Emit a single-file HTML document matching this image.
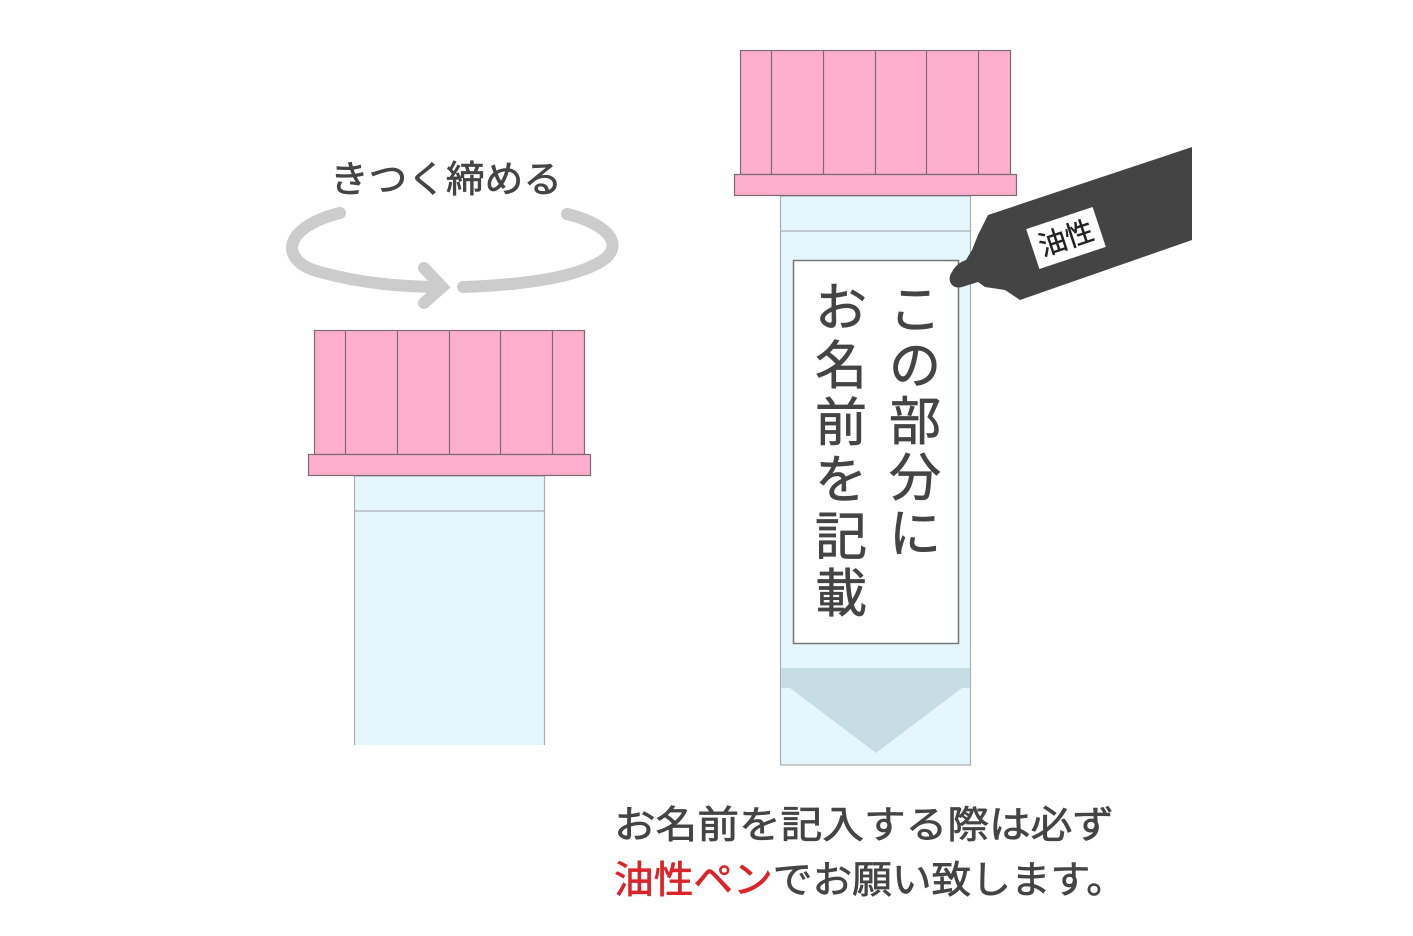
<!DOCTYPE html>
<html><head><meta charset="utf-8"><style>
html,body{margin:0;padding:0;background:#fff;width:1413px;height:936px;overflow:hidden}
svg{display:block}
text{font-family:"Liberation Sans","Noto Sans CJK JP",sans-serif;fill:#444;stroke:#444;stroke-width:0.7}
</style></head><body>
<svg width="1413" height="936" viewBox="0 0 1413 936" xmlns="http://www.w3.org/2000/svg">
<g fill="none" stroke="#cccccc" stroke-width="12" stroke-linecap="round">
<path d="M340 213 C 280 228, 280 262, 320 272 C 360 283, 400 287, 440 287"/>
<path d="M424 268 L442 287 L424 303"/>
<path d="M463 287 C 520 285, 580 278, 606 258 C 625 240, 600 222, 567 214"/>
</g>
<text x="330" y="192" font-size="37" textLength="232" lengthAdjust="spacingAndGlyphs">きつく締める</text>

<rect x="354.5" y="476" width="190" height="272" fill="#e6f6fd" stroke="#a9aeb3" stroke-width="1.2"/>
<rect x="353" y="745" width="193" height="5" fill="#fff"/>
<line x1="354" y1="511" x2="545" y2="511" stroke="#a9aeb3" stroke-width="1.2"/>
<rect x="314.5" y="330.5" width="270" height="124" fill="#fdaecd" stroke="#7a6a72" stroke-width="1.2"/>
<g stroke="#7a6a72" stroke-width="1.2"><line x1="345.5" y1="330" x2="345.5" y2="454"/><line x1="397.5" y1="330" x2="397.5" y2="454"/><line x1="449.5" y1="330" x2="449.5" y2="454"/><line x1="500.5" y1="330" x2="500.5" y2="454"/><line x1="552.5" y1="330" x2="552.5" y2="454"/></g>
<rect x="308.5" y="454.5" width="282" height="21" fill="#fdaecd" stroke="#7a6a72" stroke-width="1.2"/>

<rect x="780.5" y="196" width="190" height="569" fill="#e6f6fd" stroke="#a9aeb3" stroke-width="1.2"/>
<line x1="780" y1="231" x2="971" y2="231" stroke="#a9aeb3" stroke-width="1.2"/>
<rect x="781" y="668" width="189" height="20" fill="#c7dde6"/>
<polygon points="790,688 962,688 876,753" fill="#c7dde6"/>
<rect x="793.5" y="260.5" width="165" height="383" fill="#fff" stroke="#777" stroke-width="1.5"/>
<rect x="740.5" y="50.5" width="270" height="124" fill="#fdaecd" stroke="#7a6a72" stroke-width="1.2"/>
<g stroke="#7a6a72" stroke-width="1.2"><line x1="771.5" y1="50" x2="771.5" y2="174"/><line x1="823.5" y1="50" x2="823.5" y2="174"/><line x1="875.5" y1="50" x2="875.5" y2="174"/><line x1="926.5" y1="50" x2="926.5" y2="174"/><line x1="978.5" y1="50" x2="978.5" y2="174"/></g>
<rect x="734.5" y="174.5" width="282" height="21" fill="#fdaecd" stroke="#7a6a72" stroke-width="1.2"/>

<g font-size="52" text-anchor="middle">
<text x="915" y="328">こ</text><text x="915" y="384">の</text><text x="915" y="440">部</text><text x="915" y="496">分</text><text x="915" y="552">に</text>
<text x="841" y="326">お</text><text x="841" y="384">名</text><text x="841" y="441">前</text><text x="841" y="498">を</text><text x="841" y="555">記</text><text x="841" y="612">載</text>
</g>

<path d="M1192 147 L1192 240 L1020 300 L1005 290 L985 287 L978 282 L962 287 C952 290 946 280 952 272 C955 266 960 262 966 260 L972 250 L978 235 L988 215 Z" fill="#444"/>
<g transform="translate(1066 238) rotate(-18.4)">
<rect x="-35" y="-21" width="70" height="42" fill="#fff"/>
<text x="0" y="10" font-size="28" text-anchor="middle" style="fill:#222;stroke:#222;stroke-width:0.4">油性</text>
</g>

<text x="614" y="838" font-size="38" textLength="500" lengthAdjust="spacingAndGlyphs">お名前を記入する際は必ず</text>
<text x="614" y="893" font-size="38" textLength="512" lengthAdjust="spacingAndGlyphs"><tspan style="fill:#d8242a;stroke:#d8242a">油性ペン</tspan>でお願い致します。</text>
</svg>
</body></html>
